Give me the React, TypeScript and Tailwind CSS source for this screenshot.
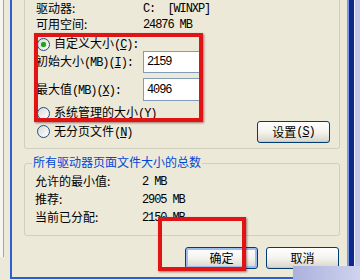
const M = ({ children }: { children: React.ReactNode }) => (
  <span className="font-['Liberation_Mono'] text-[12px] tracking-[-1.1px]">{children}</span>
)

const Radio = ({ checked }: { checked?: boolean }) => (
  <span className="w-[13px] h-[13px] rounded-full border border-[#1c5180] bg-linear-to-br from-[#dcd9cf] to-white flex items-center justify-center shrink-0">
    {checked && <span className="w-[5px] h-[5px] rounded-full bg-[#21a121] shadow-[0_0_1px_#4cc24c]" />}
  </span>
)

const Row = ({ label, value }: { label: React.ReactNode; value: React.ReactNode }) => (
  <div className="h-[16px] flex items-center">
    <div className="w-[107px]">{label}</div>
    <div className="whitespace-pre">{value}</div>
  </div>
)

const XpButton = ({ children, focused }: { children: React.ReactNode; focused?: boolean }) => (
  <div
    className={`w-[73px] h-[22px] rounded-[3px] border border-[#003c74] bg-linear-to-b from-white via-[#f4f3ee] to-[#d8d4c8] flex items-center justify-center ${
      focused ? "shadow-[inset_0_0_0_2px_#9dbcf0]" : "shadow-[inset_0_-1px_0_#cdc9bb]"
    }`}
  >
    {children}
  </div>
)

export default function App() {
  return (
    <div className="w-[360px] h-[280px] relative overflow-hidden bg-[#ECE9D8] flex font-['Noto_Sans_CJK_SC',sans-serif] text-[12px] text-black leading-none">
      {/* window behind */}
      <div className="w-[10px] h-full flex">
        <div className="w-[3px] h-[257px] bg-[#f6f5f1]" />
        <div className="w-[1px] h-[257px] bg-[#a7a59a]" />
      </div>

      {/* dialog */}
      <div className="w-[344px] h-[279px] border-l-2 border-b-2 border-[#2e5fd2] border-r-[5px] border-r-[#0d2a8a] flex flex-col">
        <div className="flex-1 flex flex-col border-r-2 border-[#7b9ae4]">
          {/* group 1 */}
          <div className="ml-[12px] w-[316px] h-[149px] border-l border-r border-b border-[#d0d0bf] rounded-b-[3px] pl-[11px] pr-[9px] flex flex-col">
            <Row label="驱动器:" value={<M>{"C:  [WINXP]"}</M>} />
            <Row label="可用空间:" value={<M>24876 MB</M>} />
            <div className="mt-[5px] h-[14px] flex items-center gap-[4px] pl-[1px]">
              <Radio checked />
              <span>
                自定义大小<M>(<u>C</u>):</M>
              </span>
            </div>
            <div className="h-[22px] flex items-center">
              <div className="w-[107px]">
                初始大小<M>(MB)(<u>I</u>):</M>
              </div>
              <div className="w-[58px] h-[22px] bg-white border border-[#7f9db9] pl-[3px] flex items-center">
                <M>2159</M>
              </div>
            </div>
            <div className="mt-[5px] h-[23px] flex items-center">
              <div className="w-[107px]">
                最大值<M>(MB)(<u>X</u>):</M>
              </div>
              <div className="w-[58px] h-[23px] bg-white border border-[#7f9db9] pl-[3px] flex items-center">
                <M>4096</M>
              </div>
            </div>
            <div className="mt-[4px] h-[16px] flex items-center gap-[4px] pl-[1px]">
              <Radio />
              <span>
                系统管理的大小<M>(<u>Y</u>)</M>
              </span>
            </div>
            <div className="h-[21px] flex items-center justify-between pl-[1px]">
              <div className="flex items-center gap-[4px]">
                <Radio />
                <span>
                  无分页文件<M>(<u>N</u>)</M>
                </span>
              </div>
              <XpButton>
                设置<M>(<u>S</u>)</M>
              </XpButton>
            </div>
          </div>

          {/* group 2 */}
          <div className="ml-[12px] mt-[14px] w-[316px] h-[73px] border border-[#d0d0bf] rounded-[3px] pl-[10px] flex flex-col">
            <div className="-mt-[10px] -ml-[3px] w-fit h-[16px] px-[1px] bg-[#ECE9D8] text-[#0046d5] flex items-center">
              所有驱动器页面文件大小的总数
            </div>
            <div className="mt-[3px] flex flex-col gap-[2px]">
              <Row label="允许的最小值:" value={<M>2 MB</M>} />
              <Row label="推荐:" value={<M>2905 MB</M>} />
              <Row label="当前已分配:" value={<M>2150 MB</M>} />
            </div>
          </div>

          {/* buttons */}
          <div className="mt-[11px] flex justify-end gap-[8px] pr-[8px]">
            <XpButton focused>确定</XpButton>
            <XpButton>取消</XpButton>
          </div>
        </div>
      </div>

      <div className="w-[1px] h-full bg-[#eef0fa]" />
      <div className="flex-1 h-full bg-[#c4cae8]" />

      {/* red highlight boxes */}
      <div className="absolute left-[34px] top-[33px] w-[169px] h-[89px] border-[4px] border-[#e01414] shadow-[1px_1px_2px_rgba(90,0,0,0.5)]" />
      <div className="absolute left-[158px] top-[217px] w-[88px] h-[54px] border-[4px] border-[#e01414] shadow-[1px_1px_2px_rgba(90,0,0,0.5)]" />

      {/* corner watermark */}
      <div className="absolute left-[293px] top-[266px] w-[67px] h-[14px] bg-linear-to-r from-[#aab1dd] to-[#cfd3ee]" />
    </div>
  )
}
